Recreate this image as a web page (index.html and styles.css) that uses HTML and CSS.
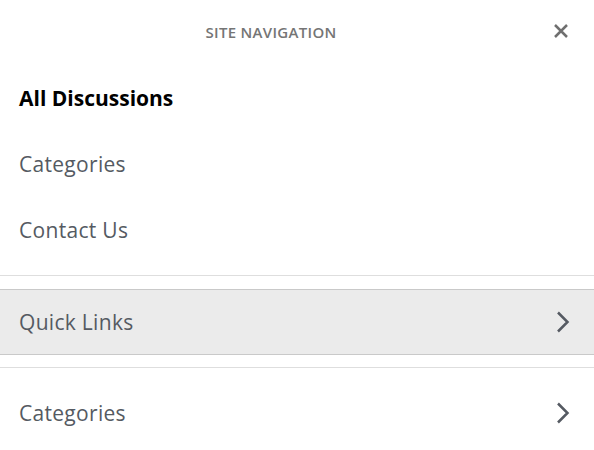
FILE: index.html
```html
<!DOCTYPE html>
<html lang="en">
<head>
<meta charset="utf-8">
<title>Site Navigation</title>
<link rel="stylesheet" href="styles.css">
</head>
<body>
<nav class="panel">
  <header class="panel-header">
    <h2 class="panel-title">Site Navigation</h2>
    <button class="close" aria-label="Close">
      <svg width="16" height="16" viewBox="0 0 16 16"><path d="M2 2 L14 14 M14 2 L2 14" stroke="#6f6f6f" stroke-width="2.5" fill="none"/></svg>
    </button>
  </header>
  <ul class="links">
    <li class="link active">All Discussions</li>
    <li class="link">Categories</li>
    <li class="link">Contact Us</li>
  </ul>
  <div class="section">
    <div class="row highlighted">
      <span>Quick Links</span>
      <svg class="chev" width="16" height="22" viewBox="0 0 16 22"><path d="M3 1.5 L12.5 11 L3 20.5" stroke="#555a62" stroke-width="2.5" fill="none"/></svg>
    </div>
  </div>
  <div class="section">
    <div class="row">
      <span>Categories</span>
      <svg class="chev" width="16" height="22" viewBox="0 0 16 22"><path d="M3 1.5 L12.5 11 L3 20.5" stroke="#555a62" stroke-width="2.5" fill="none"/></svg>
    </div>
  </div>
</nav>
</body>
</html>
```

FILE: styles.css
```css
* { box-sizing: border-box; }
html, body { margin: 0; padding: 0; background: #fff; }
body { font-family: "Open Sans", "Liberation Sans", sans-serif; }
.panel { width: 594px; }
.panel-header {
  position: relative;
  height: 64px;
  display: flex;
  align-items: center;
  justify-content: center;
}
.panel-title {
  margin: 0 0 0 -52px;
  font-size: 15px;
  font-weight: 600;
  letter-spacing: 0.3px;
  text-transform: uppercase;
  color: #757575;
}
.close {
  position: absolute;
  right: 25px;
  top: 23px;
  padding: 0;
  border: 0;
  background: none;
  width: 16px;
  height: 16px;
  display: block;
}
.close svg { display: block; }
.links { list-style: none; margin: 1px 0 0; padding: 0; }
.link {
  height: 66px;
  display: flex;
  align-items: center;
  padding-left: 19px;
  font-size: 21px;
  letter-spacing: 0.3px;
  color: #555a62;
}
.link.active { color: #000; font-weight: 700; letter-spacing: 0; }
.section {
  margin-top: 12px;
  border-top: 1px solid #dedede;
  padding-top: 13px;
}
.section + .section { padding-top: 12px; }
.row {
  height: 66px;
  display: flex;
  align-items: center;
  justify-content: space-between;
  padding: 0 23px 0 19px;
  font-size: 21px;
  letter-spacing: 0.3px;
  color: #555a62;
}
.row.highlighted {
  background: #ebebeb;
  border-top: 1px solid #c9c9c9;
  border-bottom: 1px solid #c9c9c9;
}
.chev { display: block; }
```
